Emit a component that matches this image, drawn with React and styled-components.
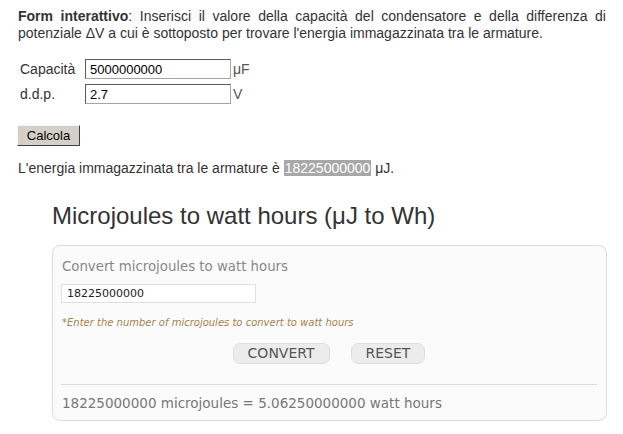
import React from 'react';
import styled, { createGlobalStyle } from 'styled-components';

const GlobalStyle = createGlobalStyle`
  body {
    margin: 0;
    background: #ffffff;
    font-family: 'Liberation Sans', Arial, sans-serif;
    color: #333333;
  }
`;

function App() {
  return (
    <Page>
      <GlobalStyle />
      <Intro>
        <b>Form interattivo</b>: Inserisci il valore della capacità del condensatore e della differenza di potenziale ΔV a cui è sottoposto per trovare l'energia immagazzinata tra le armature.
      </Intro>
      <FormGrid>
        <Label>Capacità</Label>
        <Field defaultValue="5000000000" />
        <Unit>μF</Unit>
        <Label>d.d.p.</Label>
        <Field defaultValue="2.7" />
        <Unit>V</Unit>
      </FormGrid>
      <CalcButton>Calcola</CalcButton>
      <Result>
        L'energia immagazzinata tra le armature è <Highlight>18225000000</Highlight> μJ.
      </Result>
      <Converter>
        <Title>Microjoules to watt hours (μJ to Wh)</Title>
        <Box>
          <BoxLabel>Convert microjoules to watt hours</BoxLabel>
          <BoxInput defaultValue="18225000000" />
          <Note>*Enter the number of microjoules to convert to watt hours</Note>
          <ButtonRow>
            <SoftButton>CONVERT</SoftButton>
            <SoftButton>RESET</SoftButton>
          </ButtonRow>
          <Rule />
          <Output>18225000000 microjoules = 5.06250000000 watt hours</Output>
        </Box>
      </Converter>
    </Page>
  );
}

export default App;

const Page = styled.div`
  width: 623px;
  height: 434px;
  padding: 8px 0 0 18px;
  box-sizing: border-box;
  overflow: hidden;
`;

const Intro = styled.p`
  width: 588px;
  margin: 0;
  font-size: 14px;
  line-height: 17px;
  text-align: justify;
  b { font-weight: bold; }
`;

const FormGrid = styled.div`
  display: grid;
  grid-template-columns: 65px 146px auto;
  row-gap: 5px;
  align-items: center;
  margin: 17px 0 0 2px;
`;

const Label = styled.span`
  font-size: 14px;
`;

const Field = styled.input`
  width: 146px;
  height: 20px;
  box-sizing: border-box;
  border: 1px solid #a5a5a5;
  border-top-color: #5a5a5a;
  border-left-color: #5a5a5a;
  padding: 0 4px;
  font-family: 'Liberation Sans', Arial, sans-serif;
  font-size: 13px;
  color: #000;
  outline: none;
`;

const Unit = styled.span`
  font-size: 14px;
  padding-left: 2px;
  color: #555;
`;

const CalcButton = styled.button`
  display: block;
  margin: 21px 0 0 -1px;
  width: 63px;
  height: 21px;
  background: #d4d0c8;
  border: 1px solid;
  border-color: #f4f4f4 #404040 #404040 #f4f4f4;
  font-family: 'Liberation Sans', Arial, sans-serif;
  font-size: 13px;
  color: #000;
  padding: 0;
`;

const Result = styled.p`
  margin: 14px 0 0;
  font-size: 14px;
  line-height: 17px;
`;

const Highlight = styled.span`
  background: #a8a8a8;
  color: #ffffff;
  padding: 0 1px;
`;

const Converter = styled.div`
  margin-left: 34px;
  width: 555px;
`;

const Title = styled.h2`
  margin: 24px 0 0;
  font-weight: normal;
  font-size: 24px;
  line-height: 30px;
  color: #333;
`;

const Box = styled.div`
  margin-top: 14px;
  height: 176px;
  box-sizing: border-box;
  border: 1px solid #dcdcdc;
  border-radius: 8px;
  background: #fbfbfb;
  padding: 13px 9px 0 8px;
  font-family: 'DejaVu Sans', Verdana, sans-serif;
`;

const BoxLabel = styled.div`
  font-size: 13.3px;
  line-height: 16px;
  color: #888;
  padding-left: 1px;
`;

const BoxInput = styled.input`
  display: block;
  margin-top: 9px;
  width: 195px;
  height: 19px;
  box-sizing: border-box;
  border: 1px solid #e0e0e0;
  background: #fff;
  padding: 0 5px;
  font-family: 'DejaVu Sans', Verdana, sans-serif;
  font-size: 11px;
  color: #222;
  outline: none;
`;

const Note = styled.div`
  margin-top: 14px;
  padding-left: 1px;
  font-size: 10px;
  line-height: 12px;
  font-style: italic;
  color: #a5844d;
`;

const ButtonRow = styled.div`
  display: flex;
  justify-content: center;
  gap: 21px;
  margin-top: 14px;
`;

const SoftButton = styled.button`
  height: 21px;
  padding: 0 14px;
  border: 1px solid #dedede;
  border-radius: 7px;
  background: #ececec;
  font-family: 'DejaVu Sans', Verdana, sans-serif;
  font-size: 14px;
  line-height: 19px;
  color: #555;
`;

const Rule = styled.div`
  margin-top: 20px;
  height: 1px;
  background: #dadada;
`;

const Output = styled.div`
  margin-top: 10px;
  padding-left: 1px;
  font-size: 13.5px;
  line-height: 16px;
  color: #777;
`;
